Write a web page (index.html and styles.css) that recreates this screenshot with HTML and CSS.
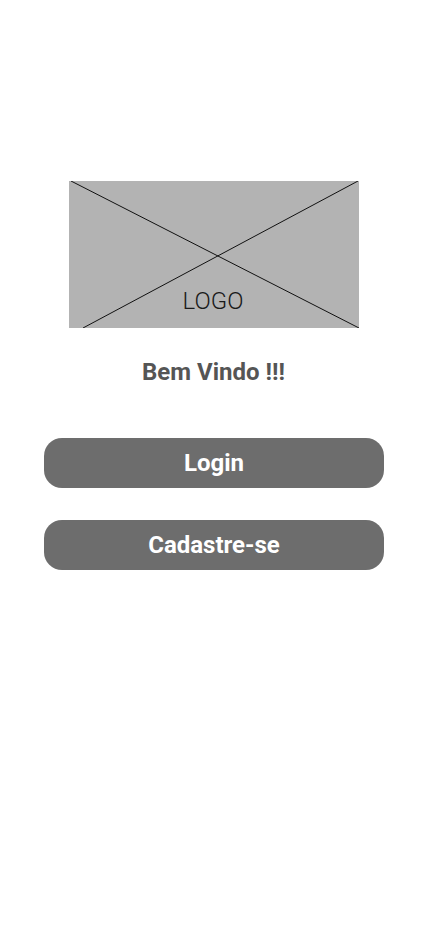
FILE: index.html
```html
<!DOCTYPE html>
<html lang="pt">
<head>
<meta charset="utf-8">
<title>Bem Vindo</title>
<link rel="stylesheet" href="styles.css">
</head>
<body>
<main class="screen">
  <div class="logo">
    <svg class="logo-x" width="290" height="147" viewBox="0 0 290 147" aria-hidden="true">
      <line x1="2" y1="0" x2="290" y2="147" stroke="#111" stroke-width="1"/>
      <line x1="289" y1="0" x2="14" y2="147" stroke="#111" stroke-width="1"/>
    </svg>
    <span class="logo-text">LOGO</span>
  </div>
  <h1 class="welcome">Bem Vindo !!!</h1>
  <div class="actions">
    <button class="btn">Login</button>
    <button class="btn">Cadastre-se</button>
  </div>
</main>
</body>
</html>
```

FILE: styles.css
```css
html, body {
  margin: 0;
  padding: 0;
  background: #ffffff;
}
body {
  font-family: Roboto, "Noto Sans", sans-serif;
}
.screen {
  width: 428px;
  height: 926px;
  display: flex;
  flex-direction: column;
  align-items: center;
  padding-top: 181px;
  box-sizing: border-box;
}
.logo {
  position: relative;
  width: 290px;
  height: 147px;
  background: #b3b3b3;
  display: flex;
  justify-content: center;
  align-items: flex-end;
}
.logo-x {
  position: absolute;
  left: 0;
  top: 0;
}
.logo-text {
  position: relative;
  font-weight: 300;
  font-size: 24px;
  line-height: 28px;
  color: #1a1a1a;
  margin-bottom: 13px;
  margin-right: 2px;
}
.welcome {
  margin: 30px 0 0 -1px;
  font-size: 24px;
  line-height: 28px;
  font-weight: 700;
  color: #555555;
}
.actions {
  margin-top: 52px;
  display: flex;
  flex-direction: column;
  gap: 32px;
}
.btn {
  width: 340px;
  height: 50px;
  border: none;
  border-radius: 18px;
  background: #6d6d6d;
  color: #ffffff;
  font-family: Roboto, "Noto Sans", sans-serif;
  font-weight: 700;
  font-size: 24px;
  padding: 0;
}
```
